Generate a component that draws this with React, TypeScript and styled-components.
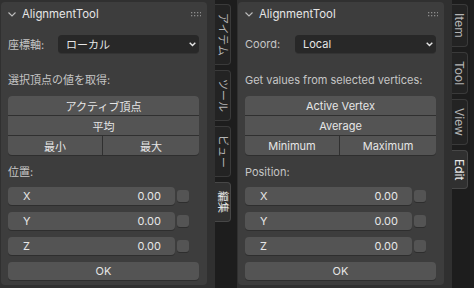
import React from 'react';
import styled, { createGlobalStyle } from 'styled-components';

const GlobalStyle = createGlobalStyle`
  html, body {
    margin: 0;
    padding: 0;
    background: #1d1d1d;
  }
  body {
    font-family: Inter, "Noto Sans CJK JP", sans-serif;
    -webkit-font-smoothing: antialiased;
  }
`;

const Screen = styled.div`
  display: flex;
  width: 474px;
  height: 288px;
  overflow: hidden;
`;

const Sidebar = styled.div`
  display: flex;
  width: 237px;
  height: 288px;
`;

const Region = styled.div`
  width: 215px;
  background: #303030;
  padding: 2px 8px 0 1px;
  box-sizing: border-box;
`;

const Panel = styled.section`
  height: 283px;
  background: #3d3d3d;
  border-radius: 4px;
  display: flex;
  flex-direction: column;
`;

const PanelHeader = styled.header`
  height: 24px;
  display: flex;
  align-items: center;
  gap: 6px;
  padding: 0 6px 0 7px;
  color: #e6e6e6;
  font-size: 11.4px;
  svg { flex: none; }
`;

const Title = styled.span`
  flex: 1;
`;

const Body = styled.div`
  display: flex;
  flex-direction: column;
  padding: 0 8px 0 7px;
  font-size: 11px;
`;

const Row = styled.div<{ $top: number }>`
  display: flex;
  align-items: center;
  gap: 2px;
  height: 18px;
  margin-top: ${p => p.$top}px;
`;

const Label = styled.div<{ $top: number }>`
  height: 20px;
  line-height: 20px;
  margin-top: ${p => p.$top}px;
  color: #c6c6c6;
  white-space: nowrap;
`;

const FieldLabel = styled.span`
  width: 48px;
  flex: none;
  color: #c6c6c6;
`;

const Dropdown = styled.div`
  flex: 1;
  height: 18px;
  background: #282828;
  border-radius: 4px;
  display: flex;
  align-items: center;
  justify-content: space-between;
  padding: 0 3px 0 8px;
  color: #e6e6e6;
  box-shadow: 0 1px 0 #333;
`;

const Group = styled.div<{ $top: number }>`
  margin-top: ${p => p.$top}px;
  display: grid;
  gap: 1px;
  background: #303030;
  border-radius: 4px;
  overflow: hidden;
  box-shadow: 0 1px 0 #2e2e2e;
`;

const Split = styled.div`
  display: grid;
  grid-template-columns: 94px 1fr;
  gap: 1px;
`;

const Button = styled.div<{ $h?: number }>`
  height: ${p => p.$h ?? 19}px;
  background: #545454;
  color: #e6e6e6;
  display: flex;
  align-items: center;
  justify-content: center;
`;

const OkButton = styled(Button)`
  flex: 1;
  border-radius: 4px;
  box-shadow: 0 1px 0 #2e2e2e;
`;

const NumberField = styled.div`
  width: 167px;
  height: 18px;
  flex: none;
  background: #545454;
  border-radius: 4px;
  display: flex;
  align-items: center;
  justify-content: space-between;
  padding: 0 14px 0 15px;
  box-sizing: border-box;
  color: #e6e6e6;
  box-shadow: 0 1px 0 #2e2e2e;
`;

const Checkbox = styled.div`
  width: 12px;
  height: 12px;
  border-radius: 3px;
  background: #545454;
  box-shadow: 0 1px 0 #2e2e2e;
`;

const TabColumn = styled.nav`
  width: 22px;
  background: #1d1d1d;
  padding-top: 4px;
  display: flex;
  flex-direction: column;
  gap: 5px;
  box-sizing: border-box;
`;

const Tab = styled.div<{ $active?: boolean; $size: number; $pad: number }>`
  width: 16px;
  box-sizing: border-box;
  padding: ${p => p.$pad}px 0;
  border: 1px solid ${p => (p.$active ? '#474747' : '#3a3a3a')};
  border-left: none;
  border-radius: 0 4px 4px 0;
  background: ${p => (p.$active ? '#303030' : '#232323')};
  color: ${p => (p.$active ? '#e6e6e6' : '#b4b4b4')};
  writing-mode: vertical-rl;
  text-orientation: sideways;
  font-size: ${p => p.$size}px;
  line-height: 15px;
  white-space: nowrap;
`;

const Chevron = () => (
  <svg width="8" height="5" viewBox="0 0 8 5">
    <path d="M0.5 0.5 L4 4 L7.5 0.5" fill="none" stroke="#bdbdbd" strokeWidth="1.1" />
  </svg>
);

const DownArrow = () => (
  <svg width="7" height="5" viewBox="0 0 7 5">
    <path d="M0.7 0.8 L3.5 3.6 L6.3 0.8" fill="none" stroke="#e6e6e6" strokeWidth="1.4" />
  </svg>
);

const DragDots = () => (
  <svg width="10" height="5" viewBox="0 0 10 5">
    {[0, 3, 6, 9].map(x =>
      [0, 3].map(y => <rect key={`${x}-${y}`} x={x} y={y} width="1.3" height="1.3" fill="#8c8c8c" />)
    )}
  </svg>
);

type Texts = {
  coord: string;
  local: string;
  fetch: string;
  active: string;
  average: string;
  min: string;
  max: string;
  position: string;
  tabs: string[];
  tabSize: number;
  tabPad: number;
};

const ja: Texts = {
  coord: '座標軸:',
  local: 'ローカル',
  fetch: '選択頂点の値を取得:',
  active: 'アクティブ頂点',
  average: '平均',
  min: '最小',
  max: '最大',
  position: '位置:',
  tabs: ['アイテム', 'ツール', 'ビュー', '編集'],
  tabSize: 11,
  tabPad: 8,
};

const en: Texts = {
  coord: 'Coord:',
  local: 'Local',
  fetch: 'Get values from selected vertices:',
  active: 'Active Vertex',
  average: 'Average',
  min: 'Minimum',
  max: 'Maximum',
  position: 'Position:',
  tabs: ['Item', 'Tool', 'View', 'Edit'],
  tabSize: 12,
  tabPad: 8,
};

const AlignmentSidebar = ({ t }: { t: Texts }) => (
  <Sidebar>
    <Region>
      <Panel>
        <PanelHeader>
          <Chevron />
          <Title>AlignmentTool</Title>
          <DragDots />
        </PanelHeader>
        <Body>
          <Row $top={9}>
            <FieldLabel>{t.coord}</FieldLabel>
            <Dropdown>
              <span>{t.local}</span>
              <DownArrow />
            </Dropdown>
          </Row>
          <Label $top={17}>{t.fetch}</Label>
          <Group $top={6}>
            <Button>{t.active}</Button>
            <Button>{t.average}</Button>
            <Split>
              <Button>{t.min}</Button>
              <Button>{t.max}</Button>
            </Split>
          </Group>
          <Label $top={7}>{t.position}</Label>
          {['X', 'Y', 'Z'].map((axis, i) => (
            <Row key={axis} $top={i === 0 ? 5 : 7}>
              <NumberField>
                <span>{axis}</span>
                <span>0.00</span>
              </NumberField>
              <Checkbox />
            </Row>
          ))}
          <Row $top={7}>
            <OkButton $h={18}>OK</OkButton>
          </Row>
        </Body>
      </Panel>
    </Region>
    <TabColumn>
      {t.tabs.map((name, i) => (
        <Tab key={name} $active={i === t.tabs.length - 1} $size={t.tabSize} $pad={t.tabPad}>
          {name}
        </Tab>
      ))}
    </TabColumn>
  </Sidebar>
);

const App = () => (
  <>
    <GlobalStyle />
    <Screen>
      <AlignmentSidebar t={ja} />
      <AlignmentSidebar t={en} />
    </Screen>
  </>
);

export default App;
